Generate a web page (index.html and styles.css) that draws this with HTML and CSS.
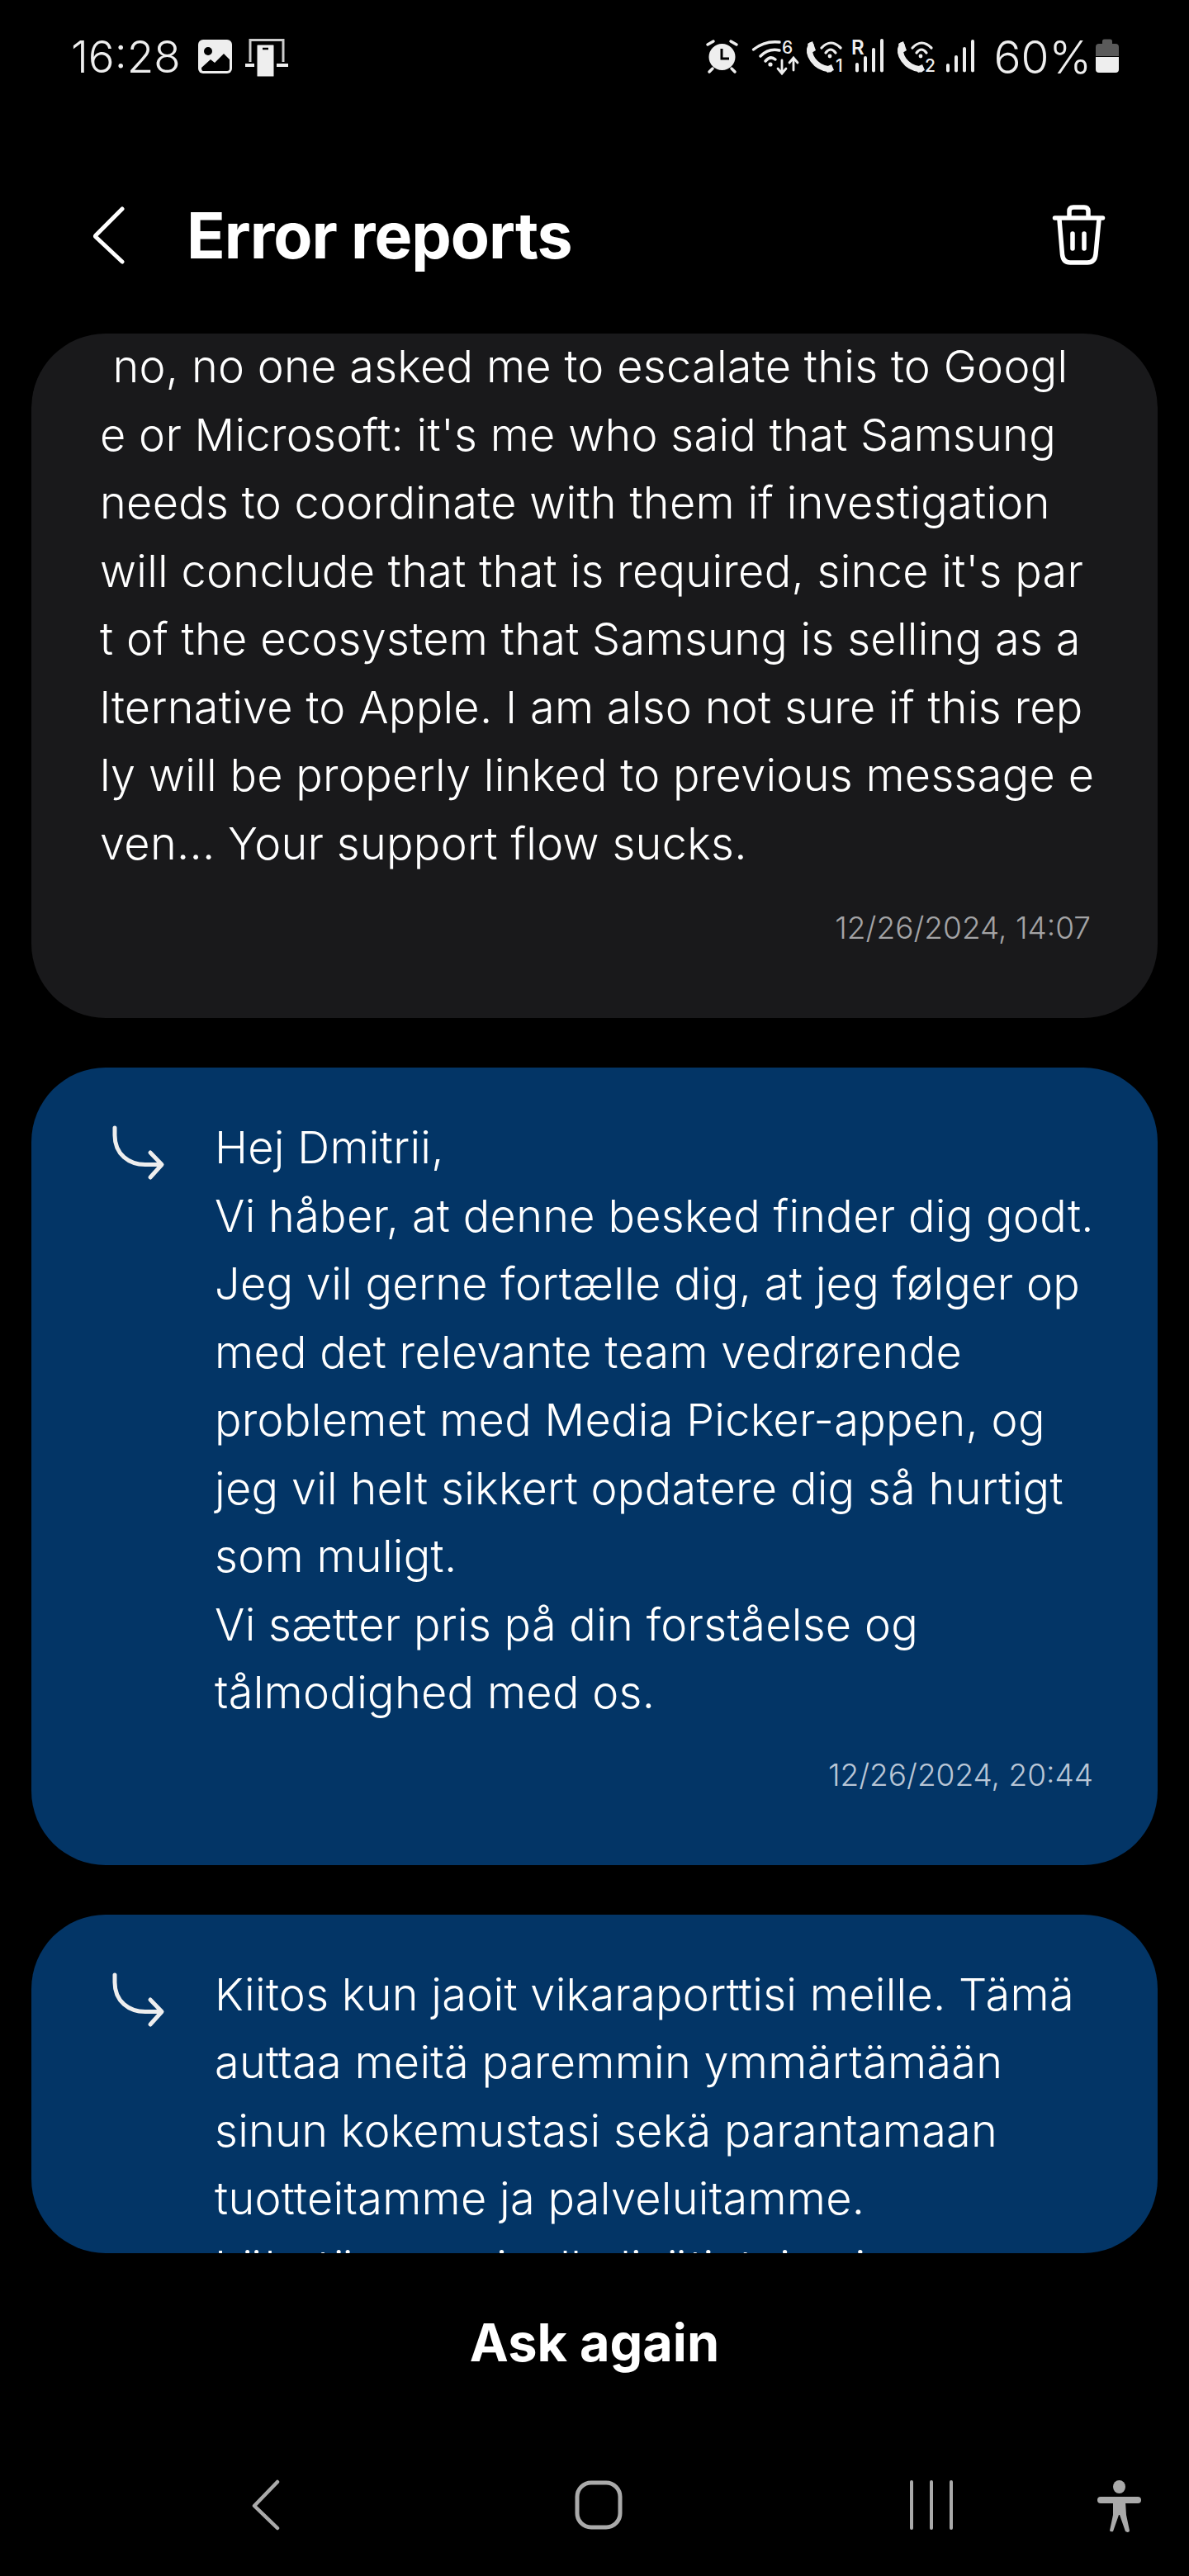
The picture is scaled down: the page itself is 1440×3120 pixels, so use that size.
FILE: index.html
```html
<!DOCTYPE html>
<html lang="en">
<head>
    <meta charset="UTF-8">
    <meta name="viewport" content="width=device-width, initial-scale=1.0">
    <title>Error reports</title>
    <link rel="stylesheet" href="styles.css">
</head>
<body>
  <div class="phone">

    <!-- status bar -->
    <div class="status-bar">
      <div class="status-left">
        <span class="status-text">16:28</span>
        <svg class="ic-gallery" viewBox="0 0 41 48">
          <rect x="0" y="1" width="41" height="41" rx="6" fill="#eee"/>
          <circle cx="12" cy="15" r="5" fill="#000"/>
          <path d="M4 35 L15 25 L20 29 L31 18 L38 25 V36 Q38 39 35 39 H6 Q4 39 4 35Z" fill="#000"/>
        </svg>
        <svg class="ic-dex" viewBox="0 0 52 48">
          <path d="M6 28 V1.5 H46 V28" fill="none" stroke="#ccc" stroke-width="3"/>
          <path d="M0 32 H11 M38 32 H52" stroke="#eee" stroke-width="4"/>
          <rect x="13" y="6" width="23" height="41" rx="2" fill="#eee" stroke="#000" stroke-width="3"/>
          <path d="M21 12 H28" stroke="#000" stroke-width="2.5"/>
        </svg>
      </div>
      <div class="status-right">
        <svg class="ic-alarm" viewBox="0 0 37 48">
          <circle cx="18.5" cy="22" r="16" fill="#eee"/>
          <path d="M18 12 V24 H27" fill="none" stroke="#000" stroke-width="3"/>
          <path d="M1 7 L8 3 M36 7 L29 3 M3 40 L7 36 M34 40 L30 36" stroke="#eee" stroke-width="3.5" stroke-linecap="round"/>
        </svg>
        <svg class="ic-wifi" viewBox="0 0 57 48">
          <g fill="none" stroke="#eee" stroke-width="3.5" stroke-linecap="round">
            <path d="M1.5 13 Q15 2 33 4"/>
            <path d="M10 21 Q20 11 33 14"/>
            <path d="M16 27 Q22 20 28 25"/>
            <path d="M36 26 V41 M31 36 L36 42 L41 36 M50 38 V24 M45 29 L50 23 L55 29" stroke-width="2.8"/>
          </g>
          <circle cx="22" cy="31" r="2.6" fill="#eee"/>
          <text class="ic-label" x="36" y="18">6</text>
        </svg>
        <svg class="ic-call ic-call-one" viewBox="0 0 47 48">
          <path d="M8 8 C3 18 12 35 31 37" fill="none" stroke="#eee" stroke-width="7" stroke-linecap="round"/>
          <path d="M4 6 L10 3 L14 14 L9 17Z M33 31 L36 38 L28 41 L24 35Z" fill="#eee"/>
          <g fill="none" stroke="#eee" stroke-width="3.2" stroke-linecap="round">
            <path d="M21 11 Q32 -1 44 11"/>
            <path d="M26 17 Q32 9 38 17"/>
          </g>
          <circle cx="31" cy="21" r="2.4" fill="#eee"/>
          <text class="ic-label" x="38" y="40">1</text>
        </svg>
        <svg class="ic-rsignal" viewBox="0 0 40 48">
          <text class="ic-label ic-r" x="0" y="19">R</text>
          <path d="M7 31 V38.5 M17 23 V38.5 M27 13 V38.5 M37 2 V38.5" stroke="#eee" stroke-width="4" stroke-linecap="round"/>
        </svg>
        <svg class="ic-call ic-call-two" viewBox="0 0 47 48">
          <path d="M8 8 C3 18 12 35 31 37" fill="none" stroke="#eee" stroke-width="7" stroke-linecap="round"/>
          <path d="M4 6 L10 3 L14 14 L9 17Z M33 31 L36 38 L28 41 L24 35Z" fill="#eee"/>
          <g fill="none" stroke="#eee" stroke-width="3.2" stroke-linecap="round">
            <path d="M21 11 Q32 -1 44 11"/>
            <path d="M26 17 Q32 9 38 17"/>
          </g>
          <circle cx="31" cy="21" r="2.4" fill="#eee"/>
          <text class="ic-label" x="36" y="40">2</text>
        </svg>
        <svg class="ic-signal" viewBox="0 0 36 48">
          <path d="M3 32 V38.5 M13 22 V38.5 M23 12 V38.5 M33 3 V38.5" stroke="#eee" stroke-width="4" stroke-linecap="round"/>
        </svg>
        <span class="status-text status-pct">60%</span>
        <svg class="ic-battery" viewBox="0 0 28 48">
          <path d="M8 6 V3 Q8 0.5 10.5 0.5 H17.5 Q20 0.5 20 3 V6 H24 Q28 6 28 10 V21 H0 V10 Q0 6 4 6Z" fill="#5a5a5a"/>
          <path d="M0 22 H28 V37 Q28 41 24 41 H4 Q0 41 0 37Z" fill="#eee"/>
        </svg>
      </div>
    </div>

    <!-- title -->
    <div class="app-bar">
      <svg class="ic-back" viewBox="0 0 40 72">
        <path d="M36 4 L4 36 Q3 37 4 38 L36 68" fill="none" stroke="#fff" stroke-width="5" stroke-linecap="round" stroke-linejoin="round"/>
      </svg>
      <h1 class="title">Error reports</h1>
      <svg class="ic-trash" viewBox="0 0 65 74">
        <g fill="none" stroke="#fff" stroke-width="5.5" stroke-linecap="round" stroke-linejoin="round">
          <path d="M3.5 16 H61.5"/>
          <path d="M21 13 V8 Q21 3 26 3 H39 Q44 3 44 8 V13"/>
          <path d="M9 18 L12.5 60 Q13.5 70 22 70 H43 Q52 70 53 60 L57 18"/>
          <path d="M25 35 V53 M39 35 V53"/>
        </g>
      </svg>
    </div>

    <!-- messages, scrolled -->
    <div class="thread">
      <div class="msg msg-user">
        <p class="msg-text">&nbsp;no, no one asked me to escalate this to Googl<br>e or Microsoft: it's me who said that Samsung<br>needs to coordinate with them if investigation<br>will conclude that that is required, since it's par<br>t of the ecosystem that Samsung is selling as a<br>lternative to Apple. I am also not sure if this rep<br>ly will be properly linked to previous message e<br>ven... Your support flow sucks.</p>
        <div class="msg-date">12/26/2024, 14:07</div>
      </div>

      <div class="msg msg-reply">
        <div class="reply-row">
          <svg class="ic-reply" viewBox="0 0 63 66">
            <path d="M3 3 V12 C3 35 20 47.5 40 47.5 H59 M46 33 L60 47.5 L46 63" fill="none" stroke="#eee" stroke-width="5" stroke-linecap="round" stroke-linejoin="round"/>
          </svg>
          <p class="msg-text">Hej Dmitrii,<br>Vi håber, at denne besked finder dig godt.<br>Jeg vil gerne fortælle dig, at jeg følger op<br>med det relevante team vedrørende<br>problemet med Media Picker-appen, og<br>jeg vil helt sikkert opdatere dig så hurtigt<br>som muligt.<br>Vi sætter pris på din forståelse og<br>tålmodighed med os.</p>
        </div>
        <div class="msg-date">12/26/2024, 20:44</div>
      </div>

      <div class="msg msg-reply">
        <div class="reply-row">
          <svg class="ic-reply" viewBox="0 0 63 66">
            <path d="M3 3 V12 C3 35 20 47.5 40 47.5 H59 M46 33 L60 47.5 L46 63" fill="none" stroke="#eee" stroke-width="5" stroke-linecap="round" stroke-linejoin="round"/>
          </svg>
          <p class="msg-text">Kiitos kun jaoit vikaraporttisi meille. Tämä<br>auttaa meitä paremmin ymmärtämään<br>sinun kokemustasi sekä parantamaan<br>tuotteitamme ja palveluitamme.<br>Lähetämme sinulle lisätietoja pian.</p>
        </div>
      </div>
    </div>

    <button class="ask-btn">Ask again</button>

    <!-- system nav -->
    <div class="nav-bar">
      <svg class="ic-nav-back" viewBox="0 0 33 60">
        <path d="M31 2 L3 31 L31 58" fill="none" stroke="#aaa" stroke-width="4.5" stroke-linecap="round" stroke-linejoin="round"/>
      </svg>
      <svg class="ic-nav-home" viewBox="0 0 58 60">
        <rect x="3" y="3" width="52" height="54" rx="17" fill="none" stroke="#aaa" stroke-width="5"/>
      </svg>
      <svg class="ic-nav-recent" viewBox="0 0 53 60">
        <path d="M3 2 V58 M27 2 V58 M51 2 V58" stroke="#aaa" stroke-width="4" stroke-linecap="round"/>
      </svg>
      <svg class="ic-nav-access" viewBox="0 0 54 64">
        <ellipse cx="26.5" cy="8" rx="7.5" ry="8" fill="#aaa"/>
        <rect x="0" y="20" width="53" height="8" rx="4" fill="#aaa"/>
        <path d="M19 26 H34 L35 42 L39 61 Q39 63 36.5 63 L34 62 L27 42 L26 42 L19 62 Q16 63 15 61 L19 42Z" fill="#aaa"/>
      </svg>
    </div>
  </div>
</body>
</html>
```

FILE: styles.css
```css
* {
  box-sizing: border-box;
}

body {
  margin: 0;
  background-color: #000;
  font-family: "Inter", "Liberation Sans", sans-serif;
  color: #fff;
}

svg {
  display: block;
  overflow: visible;
  flex-shrink: 0;
}

.phone {
  width: 1440px;
  height: 3120px;
  overflow: hidden;
  display: flex;
  flex-direction: column;
}

/* status bar */
.status-bar {
  height: 165px;
  padding: 47px 85px 0 86px;
  display: flex;
  justify-content: space-between;
  align-items: flex-start;
}

.status-left,
.status-right {
  display: flex;
  align-items: flex-start;
}

.status-text {
  font-size: 53px;
  font-weight: 300;
  line-height: 44px;
  color: #eee;
}

.ic-gallery {
  width: 41px;
  height: 48px;
  margin-left: 21px;
}

.ic-dex {
  width: 52px;
  height: 48px;
  margin-left: 16px;
}

.ic-alarm { width: 37px; height: 48px; }
.ic-wifi { width: 57px; height: 48px; margin-left: 18px; }
.ic-call { width: 47px; height: 48px; }
.ic-call-one { margin-left: 6px; }
.ic-call-two { margin-left: 13px; }
.ic-rsignal { width: 40px; height: 48px; margin-left: 10px; }
.ic-signal { width: 36px; height: 48px; margin-left: 14px; }
.status-pct { margin-left: 22px; font-size: 55px; }
.ic-battery { width: 28px; height: 48px; margin-left: 5px; }

.ic-label {
  font-family: "Inter", sans-serif;
  font-size: 21px;
  font-weight: 500;
  fill: #eee;
}

.ic-r {
  font-size: 24px;
  font-weight: 600;
}

/* title */
.app-bar {
  height: 239px;
  padding: 0 101px 0 112px;
  display: flex;
  align-items: center;
}

.ic-back {
  width: 40px;
  height: 72px;
}

.title {
  margin: 0 0 0 74px;
  flex: 1;
  font-size: 77px;
  font-weight: 700;
  letter-spacing: -1px;
}

.ic-trash {
  width: 65px;
  height: 74px;
}

/* messages */
.thread {
  margin: 0 38px;
  height: 2325px;
  flex-shrink: 0;
  overflow: hidden;
  border-radius: 90px;
  display: flex;
  flex-direction: column;
  gap: 60px;
}

.msg {
  flex-shrink: 0;
  border-radius: 90px;
}

.msg-user {
  margin-top: -1px;
  background-color: #19191b;
  padding: 0 81px 84px 83px;
}

.msg-reply {
  background-color: #033566;
  padding: 56px 78px 84px 98px;
}

.msg-text {
  margin: 0;
  font-size: 54px;
  font-weight: 300;
  letter-spacing: 0.3px;
  line-height: 82.5px;
  white-space: nowrap;
  color: #fff;
}

.reply-row {
  display: flex;
  gap: 61px;
}

.ic-reply {
  width: 63px;
  height: 66px;
  margin-top: 14px;
}

.msg-date {
  margin-top: 36px;
  text-align: right;
  font-size: 37px;
  font-weight: 300;
  line-height: 50px;
  color: #a3a3a5;
}

.msg-reply .msg-date {
  margin-top: 33px;
  color: #b9c6d6;
}

/* bottom button */
.ask-btn {
  height: 215px;
  padding: 0;
  border: none;
  background: none;
  font-family: inherit;
  font-size: 63px;
  font-weight: 700;
  color: #fff;
}

/* system nav */
.nav-bar {
  padding: 60px 0 0 120px;
  display: grid;
  grid-template-columns: 403px 403px 403px 54px;
  justify-items: center;
  align-items: start;
}

.ic-nav-back { width: 33px; height: 60px; }
.ic-nav-home { width: 58px; height: 60px; }
.ic-nav-recent { width: 53px; height: 60px; }
.ic-nav-access { width: 54px; height: 64px; }
```
